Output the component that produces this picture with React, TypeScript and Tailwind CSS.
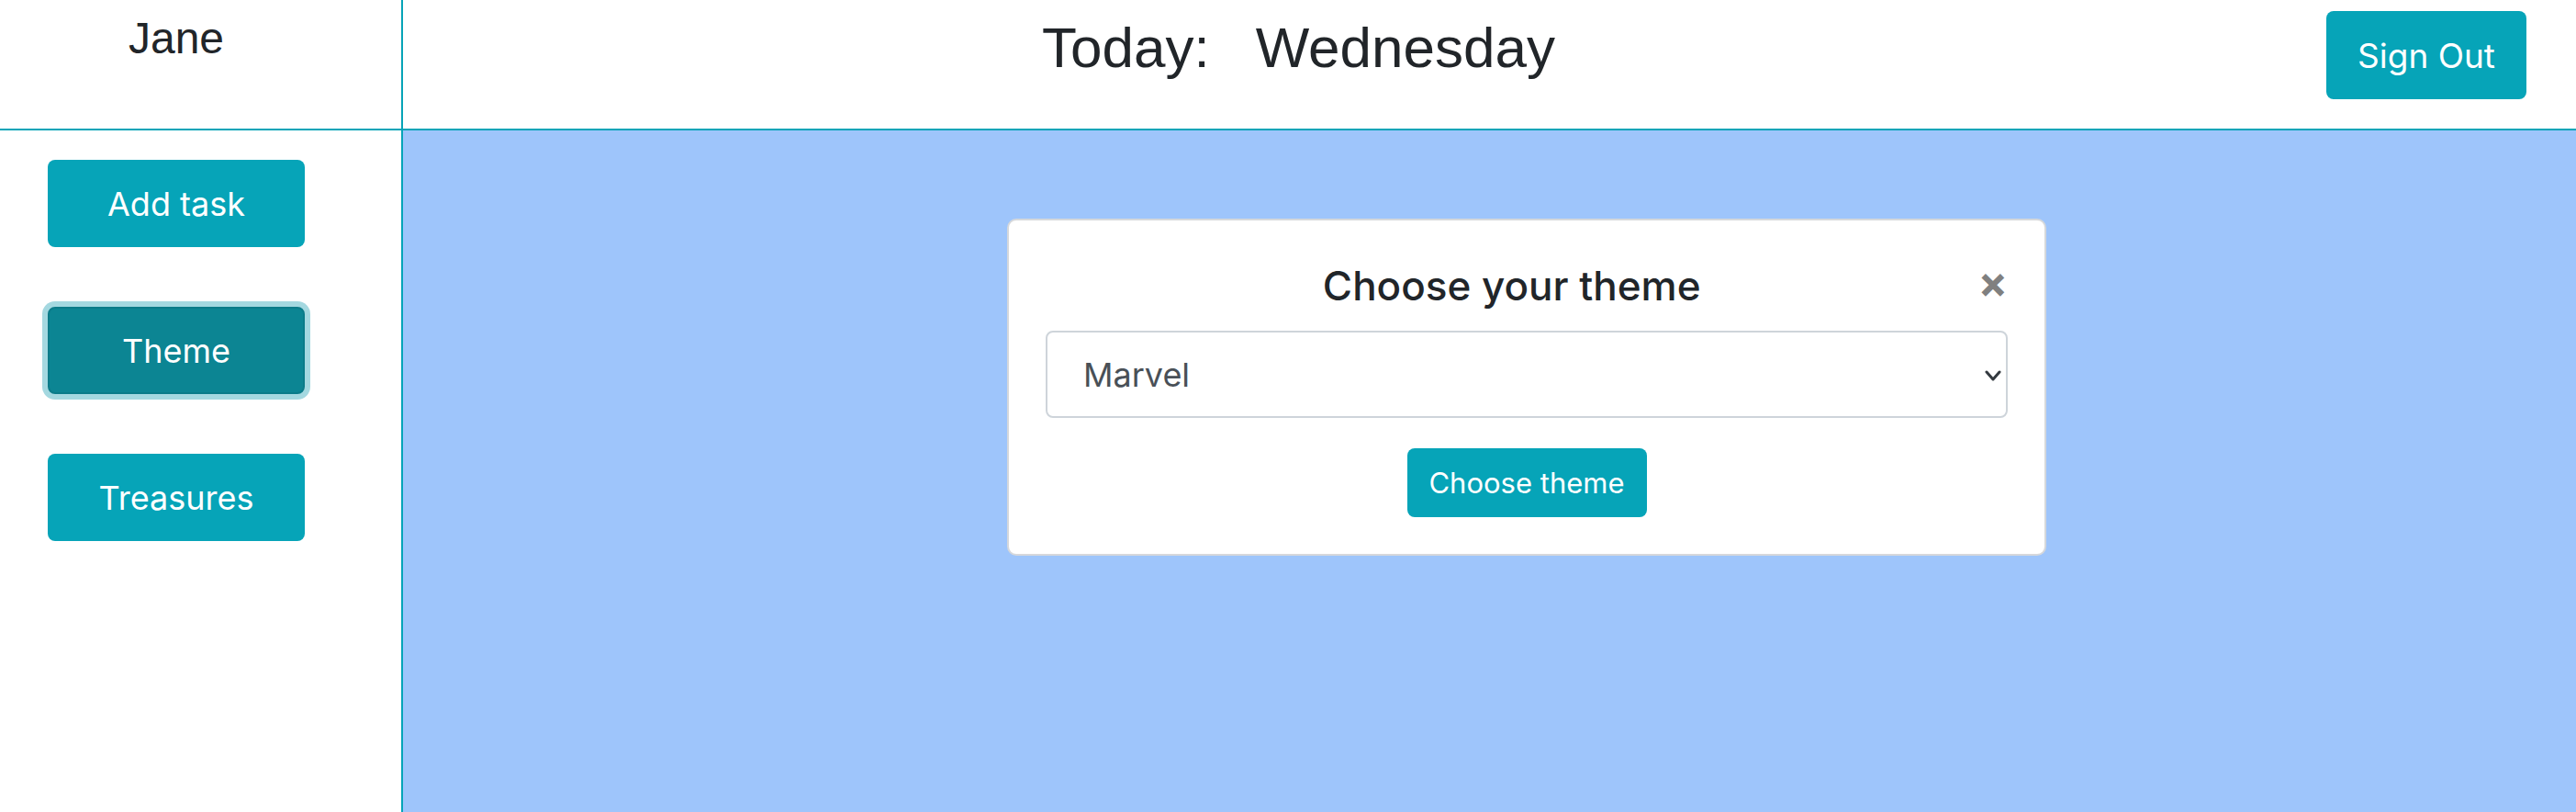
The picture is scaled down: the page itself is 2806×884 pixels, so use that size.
import { useState } from 'react'

const themes = ['Marvel', 'DC', 'Star Wars', 'Pokemon']

function SideButton({ label, active }: { label: string; active?: boolean }) {
  return (
    <button
      className={`w-[280px] h-[95px] rounded-[8px] text-white text-[36px] font-['Inter',sans-serif] leading-none ${
        active
          ? 'bg-[#0c8593] border-2 border-[#0b7b89] shadow-[0_0_0_6px_#a4d8e0]'
          : 'bg-[#06a4b8]'
      }`}
    >
      {label}
    </button>
  )
}

export default function App() {
  const [theme, setTheme] = useState('Marvel')

  return (
    <div className="flex h-[884px] w-full bg-white text-[#212529]">
      <aside className="w-[439px] shrink-0 border-r-2 border-[#06a4b8] flex flex-col">
        <div className="h-[142px] border-b-2 border-[#06a4b8] pl-[52px] pt-[18px]">
          <div className="w-[280px] text-center text-[48px] leading-none font-['Liberation_Sans',Arial,sans-serif]">
            Jane
          </div>
        </div>
        <nav className="flex flex-col gap-[65px] pl-[52px] pt-[32px]">
          <SideButton label="Add task" />
          <SideButton label="Theme" active />
          <SideButton label="Treasures" />
        </nav>
      </aside>

      <main className="flex-1 flex flex-col">
        <header className="h-[142px] shrink-0 border-b-2 border-[#06a4b8] flex items-start">
          <h1 className="pl-[696px] pt-[21px] text-[62px] leading-none font-['Liberation_Sans',Arial,sans-serif]">
            <span>Today:</span>
            <span className="ml-[50px]">Wednesday</span>
          </h1>
          <button className="ml-auto mr-[54px] mt-[12px] w-[218px] h-[96px] rounded-[8px] bg-[#06a4b8] text-white text-[37px] leading-none font-['Inter',sans-serif]">
            Sign Out
          </button>
        </header>

        <div className="flex-1 bg-[#9ec5fb] pt-[96px] pl-[658px]">
          <div className="w-[1132px] bg-white border-2 border-[#d6d8db] rounded-[10px] px-[40px] pt-[50px] pb-[40px] font-['Inter',sans-serif]">
            <div className="flex items-center h-[42px]">
              <h5 className="flex-1 text-center text-[44px] font-medium leading-none">Choose your theme</h5>
              <button className="text-[48px] font-bold leading-none text-[#808080] -mt-[8px]">×</button>
            </div>
            <div className="relative mt-[28px]">
              <select
                value={theme}
                onChange={(e) => setTheme(e.target.value)}
                className="appearance-none w-full h-[95px] border-2 border-[#ced4da] rounded-[8px] bg-white pl-[39px] text-[36px] text-[#495057] font-['Inter',sans-serif] outline-none"
              >
                {themes.map((t) => (
                  <option key={t} value={t}>
                    {t}
                  </option>
                ))}
              </select>
              <svg
                className="absolute right-[6px] top-[43px] pointer-events-none"
                width="20"
                height="12"
                viewBox="0 0 20 12"
                fill="none"
              >
                <path d="M3 2l7 8 7-8" stroke="#343a40" strokeWidth="3" strokeLinecap="round" strokeLinejoin="round" />
              </svg>
            </div>
            <div className="flex justify-center mt-[33px]">
              <button className="w-[261px] h-[75px] rounded-[8px] bg-[#06a4b8] text-white text-[31px] leading-none">
                Choose theme
              </button>
            </div>
          </div>
        </div>
      </main>
    </div>
  )
}
